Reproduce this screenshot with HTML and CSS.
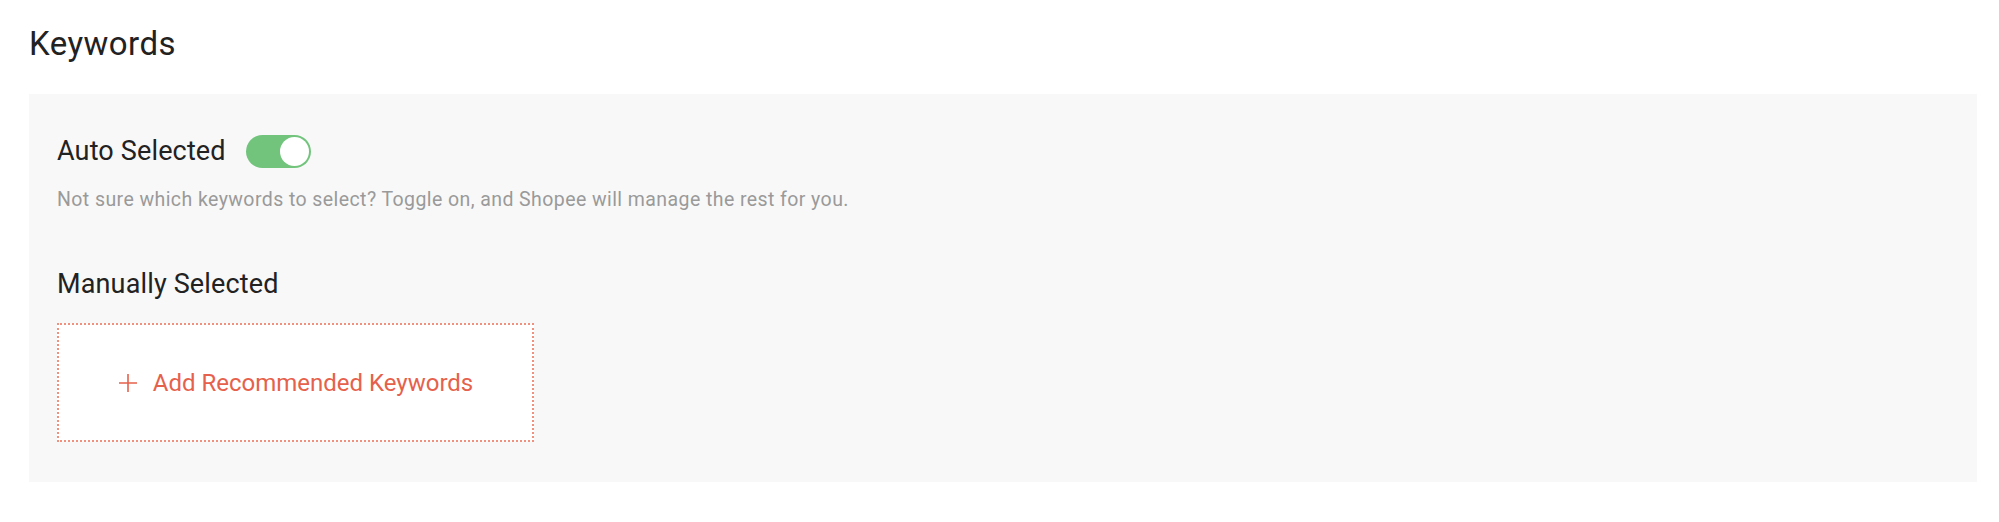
FILE: index.html
```html
<!DOCTYPE html>
<html lang="en">
<head>
<meta charset="utf-8">
<title>Keywords</title>
<link rel="stylesheet" href="styles.css">
</head>
<body>
  <section class="keywords">
    <h2 class="keywords-title">Keywords</h2>
    <div class="panel">
      <div class="auto-row">
        <span class="label">Auto Selected</span>
        <span class="toggle" role="switch" aria-checked="true"><span class="knob"></span></span>
      </div>
      <p class="hint">Not sure which keywords to select? Toggle on, and Shopee will manage the rest for you.</p>
      <div class="label manual-label">Manually Selected</div>
      <div class="add-box">
        <svg class="plus" width="20" height="20" viewBox="0 0 20 20" aria-hidden="true">
          <path d="M10 1v18M1 10h18" stroke="currentColor" stroke-width="1.6" fill="none"/>
        </svg>
        <span class="add-text">Add Recommended Keywords</span>
      </div>
    </div>
  </section>
</body>
</html>
```

FILE: styles.css
```css
* { box-sizing: border-box; }
html, body { margin: 0; background: #fff; }
body {
  font-family: Roboto, "Noto Sans", "Liberation Sans", sans-serif;
  color: #222;
}
.keywords {
  padding: 26px 22px 0 29px;
}
.keywords-title {
  margin: 0 0 32px;
  font-size: 33px;
  line-height: 36px;
  letter-spacing: 0.45px;
  font-weight: 400;
  color: #222;
}
.panel {
  background: #f8f8f8;
  padding: 41px 28px 40px;
}
.auto-row {
  display: flex;
  align-items: center;
  gap: 20px;
  height: 33px;
}
.label {
  font-size: 27px;
  line-height: 33px;
  letter-spacing: 0.15px;
  color: #222;
}
.toggle {
  display: flex;
  align-items: center;
  justify-content: flex-end;
  width: 65px;
  height: 33px;
  border-radius: 17px;
  background: #72c47d;
  padding: 2px;
}
.knob {
  width: 29px;
  height: 29px;
  border-radius: 50%;
  background: #fff;
}
.hint {
  margin: 20px 0 0;
  font-size: 19.5px;
  line-height: 24px;
  letter-spacing: 0.42px;
  color: #9a9a9a;
}
.manual-label {
  margin-top: 56px;
}
.add-box {
  margin-top: 22px;
  width: 477px;
  height: 119px;
  border: 2px dotted #f0907f;
  background: #fff;
  display: flex;
  align-items: center;
  justify-content: center;
  gap: 15px;
  color: #e6614b;
}
.plus { display: block; }
.add-text {
  font-size: 24px;
  line-height: 30px;
}
```
